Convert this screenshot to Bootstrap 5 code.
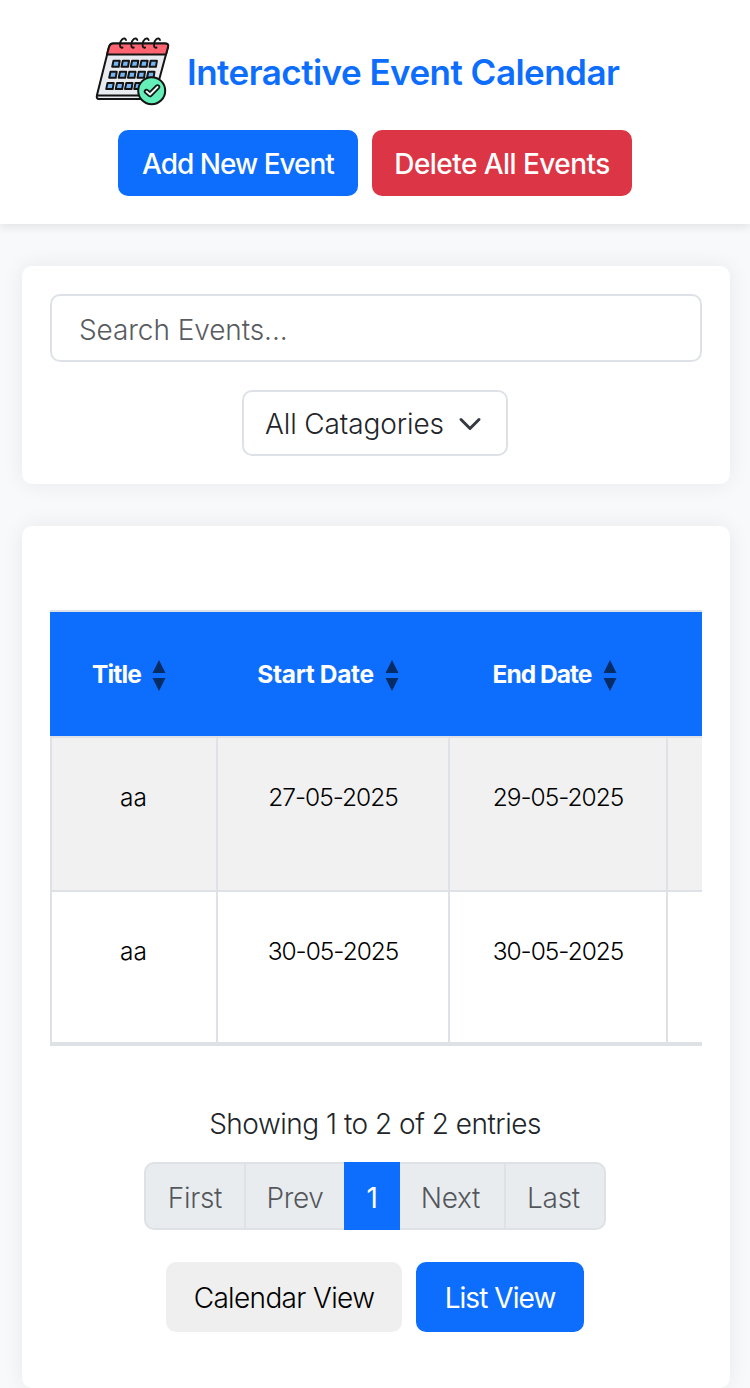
<!DOCTYPE html>
<html lang="en">
<head>
<meta charset="utf-8">
<meta name="viewport" content="width=device-width, initial-scale=1">
<title>Interactive Event Calendar</title>
<link rel="stylesheet" href="https://cdn.jsdelivr.net/npm/bootstrap@5.3.0/dist/css/bootstrap.min.css">
<style>
html{font-size:28px;overflow:hidden}
body{--bs-border-width:2px;--bs-border-radius:10px;font-family:Inter,"Liberation Sans",sans-serif;font-weight:300;background:#f8f9fa;line-height:1.5}
.site-head{height:224px;padding-top:28px;box-shadow:0 4px 8px rgba(0,0,0,.08)}
.brand-row{height:88px;padding-left:94px}
.brand-row svg{margin-bottom:4px}
.brand-title{font-size:35px;font-weight:600;color:#0d6efd;margin:0 0 0 15px;line-height:1;letter-spacing:-.53px}
.btn{padding:2px 0 0;height:66px;border-radius:10px;font-weight:500;border:0;white-space:nowrap}
.head-btns{margin-top:14px;gap:14px}
.b-add{width:240px;letter-spacing:-1px}
.b-del{width:260px;letter-spacing:-.55px}
.panel{width:708px;margin:42px 0 0 22px;padding:28px;background:#fff;border-radius:10px;box-shadow:0 0 22px rgba(0,0,0,.07)}
.form-control{height:68px;padding:3px 27px 0;font-weight:300;border-radius:10px;letter-spacing:-.08px}
.form-control::placeholder{color:#595c5f;opacity:1}
.cat-pick{width:266px;height:66px;border:2px solid #dee2e6;border-radius:10px;margin:28px 0 0 192px;padding:2px 24px 0 21px;letter-spacing:-.12px;color:#212529}
.events-panel{height:862px}
.grid-wrap{margin-top:56px;overflow:hidden}
.ev-table{width:652px;table-layout:fixed;border-collapse:separate;border-spacing:0;font-size:24.5px;text-align:center;line-height:36px;color:#000}
.ev-table th{height:128px;background:#0d6efd;color:#fff;border:solid #dee2e6;border-width:2px 0;font-weight:700;padding:0 8px 1px 0;white-space:nowrap;letter-spacing:-.9px}
.ev-table th:nth-child(2){letter-spacing:-.35px}
.ev-table th:nth-child(3){padding-right:5px;letter-spacing:-.95px}
.ev-table td{height:154px;vertical-align:top;padding:41px 0 0;border:solid #dee2e6;border-width:0 0 2px 2px;letter-spacing:-1px}
.ev-table td:first-child{padding-right:1px;letter-spacing:0}
.ev-table tbody tr:first-child td{background:#f1f1f1}
.ev-table tbody tr:last-child td{border-bottom-width:4px}
.sort-ic{margin-left:11px;vertical-align:-9px}
.info-line{margin-top:57px;padding-right:2px;text-align:center;line-height:42px;letter-spacing:-.5px}
.pagination{margin:17px 2px 0 0;letter-spacing:-.3px}
.page-link{height:68px;padding:3px 0 0;line-height:62px;text-align:center;color:#56595c;background:#e9ecef;border-color:#dee2e6}
.page-item:not(:first-child) .page-link{margin-left:-2px}
.page-item:nth-child(n+4) .page-link{padding-right:3px}
.active .page-link{background:#0d6efd;color:#fff;border-color:#0d6efd;font-weight:400}
.view-btns{margin:32px 2px 0 0;gap:14px}
.view-btns .btn{height:70px;font-weight:400}
.view-btns .b-cal{width:236px;background:#efefef;color:#000;font-weight:300;letter-spacing:-.65px}
.b-list{width:168px;letter-spacing:-.95px}
</style>
</head>
<body>
<header class="site-head bg-white">
  <div class="brand-row d-flex align-items-center">
    <svg width="78" height="74" viewBox="0 0 78 74" fill="none" stroke="#141414" stroke-width="2" stroke-linejoin="round" stroke-linecap="round">
      <path d="M19 10.500H71Q75 10.500 74 14L61 62Q60 66 56 66H5Q2 66 3 62L15 14Q16 10.500 19 10.500Z" fill="#e8ebef"/>
      <path d="M19 10.500H71Q75 10.500 74 14L72 21.500H13L15 14Q16 10.500 19 10.500Z" fill="#ff6470"/>
      <path d="M3.500 62.500H46"/>
      <g stroke-width="1.900"><path id="ring" d="M32 7Q31 4.500 28.500 6Q26 8 26 11.500Q26 15.500 28.500 14.500"/><use href="#ring" x="11.300"/><use href="#ring" x="22.600"/><use href="#ring" x="34"/></g>
      <g fill="#75b5f5" stroke-width="2">
        <path id="day" d="M19.500 27.800H25.700L24.700 33.800H18.200Z"/><use href="#day" x="9.300"/><use href="#day" x="18.600"/><use href="#day" x="27.900"/><use href="#day" x="37.200"/>
        <use href="#day" x="-3" y="11"/><use href="#day" x="6.500" y="11"/><use href="#day" x="15.800" y="11"/><use href="#day" x="25.300" y="11"/><use href="#day" x="34.800" y="11"/>
        <use href="#day" x="-6" y="22.300"/><use href="#day" x="3.500" y="22.300"/><use href="#day" x="12.800" y="22.300"/><use href="#day" x="22" y="22.300"/>
      </g>
      <circle cx="57.700" cy="57.700" r="13.500" fill="#64efb8"/>
      <path d="M52.500 58.500L56 61.500L63.500 54" stroke-width="5.400"/><path d="M52.500 58.500L56 61.500L63.500 54" stroke="#e8fff6" stroke-width="1.900"/>
    </svg>
    <h1 class="brand-title">Interactive Event Calendar</h1>
  </div>
  <div class="head-btns d-flex justify-content-center">
    <button class="btn btn-primary b-add">Add New Event</button>
    <button class="btn btn-danger b-del">Delete All Events</button>
  </div>
</header>
<main>
  <section class="panel">
    <input class="form-control" type="text" placeholder="Search Events...">
    <div class="cat-pick d-flex align-items-center justify-content-between">
      <span>All Catagories</span>
      <svg width="24" height="24" viewBox="0 0 16 16" fill="none" stroke="#343a40" stroke-width="2" stroke-linecap="round" stroke-linejoin="round"><path d="m2 5 6 6 6-6"/></svg>
    </div>
  </section>
  <section class="panel events-panel">
    <div class="grid-wrap">
      <table class="ev-table">
        <colgroup><col style="width:166px"><col style="width:232px"><col style="width:218px"><col></colgroup>
        <thead><tr>
          <th>Title<svg class="sort-ic" width="14" height="32" viewBox="0 0 14 32" fill="#052c65"><path d="M7 0l6.500 13H.5zM7 31l6.500-13H.5z"/></svg></th>
          <th>Start Date<svg class="sort-ic" width="14" height="32" viewBox="0 0 14 32" fill="#052c65"><path d="M7 0l6.500 13H.5zM7 31l6.500-13H.5z"/></svg></th>
          <th>End Date<svg class="sort-ic" width="14" height="32" viewBox="0 0 14 32" fill="#052c65"><path d="M7 0l6.500 13H.5zM7 31l6.500-13H.5z"/></svg></th>
          <th></th>
        </tr></thead>
        <tbody>
          <tr><td>aa</td><td>27-05-2025</td><td>29-05-2025</td><td></td></tr>
          <tr><td>aa</td><td>30-05-2025</td><td>30-05-2025</td><td></td></tr>
        </tbody>
      </table>
    </div>
    <div class="info-line">Showing 1 to 2 of 2 entries</div>
    <ul class="pagination justify-content-center">
      <li class="page-item disabled"><a class="page-link" style="width:102px">First</a></li>
      <li class="page-item disabled"><a class="page-link" style="width:102px">Prev</a></li>
      <li class="page-item active"><a class="page-link" style="width:56px">1</a></li>
      <li class="page-item disabled"><a class="page-link" style="width:108px">Next</a></li>
      <li class="page-item disabled"><a class="page-link" style="width:102px">Last</a></li>
    </ul>
    <div class="view-btns d-flex justify-content-center">
      <button class="btn b-cal">Calendar View</button>
      <button class="btn btn-primary b-list">List View</button>
    </div>
  </section>
</main>
<script src="https://cdn.jsdelivr.net/npm/bootstrap@5.3.0/dist/js/bootstrap.bundle.min.js"></script>
</body>
</html>
